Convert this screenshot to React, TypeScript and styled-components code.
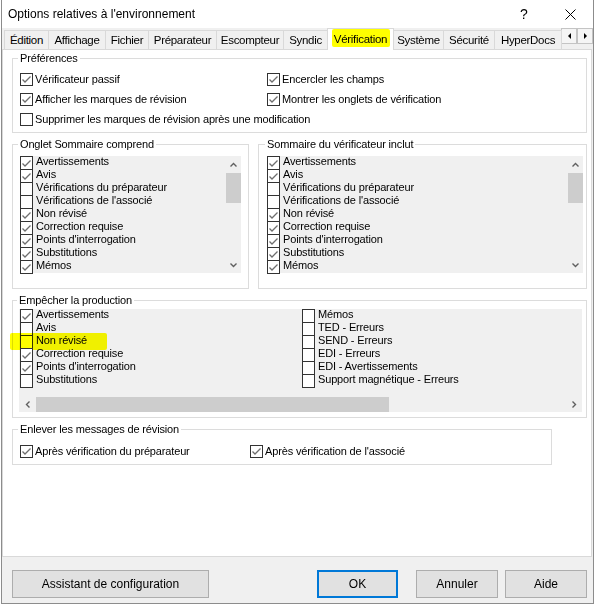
import styled, { createGlobalStyle } from "styled-components";

const GlobalStyle = createGlobalStyle`
  html, body {
    margin: 0;
    padding: 0;
    background: #ffffff;
  }
  body {
    font-family: "Liberation Sans", Arial, sans-serif;
    color: #000;
  }
  * {
    box-sizing: border-box;
  }
`;

const Window = styled.div`
  width: 593px;
  height: 604px;
  margin-left: 1px;
  border: 1px solid #8c8c8c;
  border-top: none;
  background: #f0f0f0;
  display: flex;
  flex-direction: column;
`;

const TitleBar = styled.div`
  flex: 0 0 28px;
  background: #fff;
  display: flex;
  align-items: center;
  padding-left: 6px;
  font-size: 12px;
`;

const Title = styled.div`
  flex: 1;
`;

const TitleButton = styled.div`
  width: 46px;
  height: 28px;
  display: flex;
  align-items: center;
  justify-content: center;
  font-size: 14px;
`;

const TabStrip = styled.div`
  flex: 0 0 19px;
  display: flex;
  align-items: flex-end;
  padding-left: 2px;
`;

const Tab = styled.div<{ $w: number; $active?: boolean }>`
  position: relative;
  width: ${(p) => p.$w}px;
  height: ${(p) => (p.$active ? 22 : 19)}px;
  margin-left: -1px;
  margin-bottom: ${(p) => (p.$active ? -1 : 0)}px;
  padding-bottom: ${(p) => (p.$active ? 2 : 1)}px;
  border: 1px solid #d9d9d9;
  border-bottom: none;
  background: ${(p) => (p.$active ? "#ffffff" : "#f0f0f0")};
  z-index: ${(p) => (p.$active ? 2 : 1)};
  font-size: 11.5px;
  letter-spacing: -0.3px;
  display: flex;
  align-items: center;
  justify-content: center;
  white-space: nowrap;
  &:first-child {
    margin-left: 0;
  }
`;

const Marker = styled.span<{ $l: number; $t: number; $w: number; $h: number }>`
  position: absolute;
  left: ${(p) => p.$l}px;
  top: ${(p) => p.$t}px;
  width: ${(p) => p.$w}px;
  height: ${(p) => p.$h}px;
  background: #ffff00;
  mix-blend-mode: multiply;
  border-radius: 2px;
  pointer-events: none;
`;

const TabScroll = styled.div`
  display: flex;
  align-self: flex-start;
  margin-left: -1px;
`;

const TabScrollBtn = styled.div`
  width: 16px;
  height: 16px;
  border: 1px solid #c4c4c4;
  background: #f5f5f5;
  display: flex;
  align-items: center;
  justify-content: center;
`;

const Tri = styled.span<{ $dir: "left" | "right" }>`
  width: 0;
  height: 0;
  border-top: 3px solid transparent;
  border-bottom: 3px solid transparent;
  ${(p) =>
    p.$dir === "left"
      ? "border-right: 3px solid #000;"
      : "border-left: 3px solid #000;"}
`;

const Panel = styled.div`
  flex: 0 0 508px;
  margin-right: 1px;
  border: 1px solid #d9d9d9;
  background: #fff;
  padding: 2px 4px 0 9px;
  display: flex;
  flex-direction: column;
  gap: 5px;
`;

const Group = styled.fieldset<{ $pad: string; $w?: number; $mt?: number }>`
  margin: ${(p) => p.$mt || 0}px 0 0 0;
  border: 1px solid #dcdcdc;
  padding: ${(p) => p.$pad};
  min-width: 0;
  ${(p) => (p.$w ? `width: ${p.$w}px;` : "")}
`;

const Legend = styled.legend`
  font-size: 11px;
  line-height: 13px;
  letter-spacing: -0.15px;
  padding: 0 2px;
  margin-left: -2px;
`;

const PrefGrid = styled.div<{ $col: number }>`
  display: grid;
  grid-template-columns: ${(p) => p.$col}px 1fr;
  grid-auto-rows: 20px;
`;

const CheckItem = styled.div<{ $span?: boolean }>`
  display: flex;
  align-items: center;
  gap: 2px;
  font-size: 11px;
  letter-spacing: -0.15px;
  white-space: nowrap;
  ${(p) => (p.$span ? "grid-column: 1 / -1;" : "")}
`;

const Box = styled.span<{ $stacked?: boolean }>`
  flex: 0 0 13px;
  width: 13px;
  height: ${(p) => (p.$stacked ? 14 : 13)}px;
  margin-bottom: ${(p) => (p.$stacked ? -1 : 0)}px;
  border: 1px solid #333;
  background: #fff;
  display: flex;
  align-items: center;
  justify-content: center;
`;

const ListRow = styled.div`
  display: grid;
  grid-template-columns: 237px 1fr;
  gap: 9px;
`;

const ListBox = styled.div<{ $w: number; $h: number }>`
  width: ${(p) => p.$w}px;
  height: ${(p) => p.$h}px;
  background: #f0f0f0;
  display: flex;
`;

const ListItems = styled.div`
  flex: 1;
  display: flex;
  flex-direction: column;
`;

const ListItem = styled.div`
  position: relative;
  height: 13px;
  display: flex;
  align-items: flex-start;
  font-size: 11px;
  line-height: 13px;
  letter-spacing: -0.15px;
  white-space: nowrap;
`;

const ItemText = styled.span`
  margin-left: 3px;
  margin-top: -1px;
`;

const VScroll = styled.div`
  width: 15px;
  display: flex;
  flex-direction: column;
`;

const ScrollArrow = styled.div<{ $w: number; $h: number }>`
  width: ${(p) => p.$w}px;
  height: ${(p) => p.$h}px;
  flex: 0 0 auto;
  display: flex;
  align-items: center;
  justify-content: center;
`;

const Thumb = styled.div<{ $w: number; $h: number }>`
  flex: 0 0 auto;
  width: ${(p) => p.$w}px;
  height: ${(p) => p.$h}px;
  background: #cdcdcd;
`;

const Spacer = styled.div`
  flex: 1;
`;

const WideList = styled.div`
  width: 563px;
  height: 103px;
  background: #f0f0f0;
  display: flex;
  flex-direction: column;
`;

const Columns = styled.div`
  display: grid;
  grid-template-columns: 282px 1fr;
  padding-left: 1px;
`;

const HScroll = styled.div`
  margin-top: auto;
  height: 15px;
  display: flex;
`;

const Footer = styled.div`
  flex: 1;
  display: flex;
  align-items: flex-start;
  padding: 13px 6px 0 10px;
`;

const Button = styled.div<{ $w: number; $ml?: string; $default?: boolean }>`
  width: ${(p) => p.$w}px;
  height: 28px;
  margin-left: ${(p) => p.$ml || "0"};
  background: #e1e1e1;
  border: ${(p) => (p.$default ? "2px solid #0078d7" : "1px solid #adadad")};
  font-size: 12px;
  display: flex;
  align-items: center;
  justify-content: center;
`;

const Check = () => (
  <svg width="11" height="11" viewBox="0 0 11 11">
    <polyline
      points="1.5,5.5 4,8 9.5,2.5"
      fill="none"
      stroke="#6e6e6e"
      strokeWidth="1.3"
    />
  </svg>
);

const Chevron = ({ dir }: { dir: "up" | "down" | "left" | "right" }) => {
  const pts = {
    up: "0.5,4.5 3.5,1.5 6.5,4.5",
    down: "0.5,1.5 3.5,4.5 6.5,1.5",
    left: "4.5,0.5 1.5,3.5 4.5,6.5",
    right: "1.5,0.5 4.5,3.5 1.5,6.5",
  }[dir];
  const vert = dir === "up" || dir === "down";
  return (
    <svg width={vert ? 7 : 6} height={vert ? 6 : 7} viewBox={vert ? "0 0 7 6" : "0 0 6 7"}>
      <polyline points={pts} fill="none" stroke="#606060" strokeWidth="1.4" />
    </svg>
  );
};

const tabs: [string, number][] = [
  ["Édition", 45],
  ["Affichage", 58],
  ["Fichier", 44],
  ["Préparateur", 69],
  ["Escompteur", 68],
  ["Syndic", 45],
  ["Vérification", 67],
  ["Système", 51],
  ["Sécurité", 52],
  ["HyperDocs", 68],
];

const summary: [string, boolean][] = [
  ["Avertissements", true],
  ["Avis", true],
  ["Vérifications du préparateur", false],
  ["Vérifications de l'associé", false],
  ["Non révisé", true],
  ["Correction requise", true],
  ["Points d'interrogation", true],
  ["Substitutions", true],
  ["Mémos", true],
];

const blockLeft: [string, boolean][] = [
  ["Avertissements", true],
  ["Avis", false],
  ["Non révisé", false],
  ["Correction requise", true],
  ["Points d'interrogation", true],
  ["Substitutions", false],
];

const blockRight: [string, boolean][] = [
  ["Mémos", false],
  ["TED - Erreurs", false],
  ["SEND - Erreurs", false],
  ["EDI - Erreurs", false],
  ["EDI - Avertissements", false],
  ["Support magnétique - Erreurs", false],
];

const Item = ({ label, checked, marked }: { label: string; checked: boolean; marked?: boolean }) => (
  <ListItem>
    <Box $stacked>{checked && <Check />}</Box>
    <ItemText>{label}</ItemText>
    {marked && <Marker $l={-10} $t={-2} $w={97} $h={17} />}
  </ListItem>
);

const CheckList = ({ width }: { width: number }) => (
  <ListBox $w={width} $h={117}>
    <ListItems>
      {summary.map(([l, c]) => (
        <Item key={l} label={l} checked={c} />
      ))}
    </ListItems>
    <VScroll>
      <ScrollArrow $w={15} $h={17}>
        <Chevron dir="up" />
      </ScrollArrow>
      <Thumb $w={15} $h={30} />
      <Spacer />
      <ScrollArrow $w={15} $h={17}>
        <Chevron dir="down" />
      </ScrollArrow>
    </VScroll>
  </ListBox>
);

const App = () => {
  return (
    <>
      <GlobalStyle />
      <Window>
        <TitleBar>
          <Title>Options relatives à l'environnement</Title>
          <TitleButton>?</TitleButton>
          <TitleButton>
            <svg width="11" height="11" viewBox="0 0 11 11">
              <path d="M0.5 0.5 L10.5 10.5 M10.5 0.5 L0.5 10.5" stroke="#000" strokeWidth="1" />
            </svg>
          </TitleButton>
        </TitleBar>

        <TabStrip>
          {tabs.map(([t, w]) => (
            <Tab key={t} $w={w} $active={t === "Vérification"}>
              {t}
              {t === "Vérification" && <Marker $l={4} $t={0} $w={58} $h={18} />}
            </Tab>
          ))}
          <TabScroll>
            <TabScrollBtn>
              <Tri $dir="left" />
            </TabScrollBtn>
            <TabScrollBtn>
              <Tri $dir="right" />
            </TabScrollBtn>
          </TabScroll>
        </TabStrip>

        <Panel>
          <Group $pad="4px 7px 3px 7px">
            <Legend>Préférences</Legend>
            <PrefGrid $col={247}>
              <CheckItem>
                <Box>
                  <Check />
                </Box>
                Vérificateur passif
              </CheckItem>
              <CheckItem>
                <Box>
                  <Check />
                </Box>
                Encercler les champs
              </CheckItem>
              <CheckItem>
                <Box>
                  <Check />
                </Box>
                Afficher les marques de révision
              </CheckItem>
              <CheckItem>
                <Box>
                  <Check />
                </Box>
                Montrer les onglets de vérification
              </CheckItem>
              <CheckItem $span>
                <Box />
                Supprimer les marques de révision après une modification
              </CheckItem>
            </PrefGrid>
          </Group>

          <ListRow>
            <Group $pad="5px 7px 15px 7px">
              <Legend>Onglet Sommaire comprend</Legend>
              <CheckList width={221} />
            </Group>
            <Group $pad="5px 7px 15px 8px">
              <Legend>Sommaire du vérificateur inclut</Legend>
              <CheckList width={316} />
            </Group>
          </ListRow>

          <Group $pad="2px 7px 5px 6px">
            <Legend>Empêcher la production</Legend>
            <WideList>
              <Columns>
                <ListItems>
                  {blockLeft.map(([l, c]) => (
                    <Item key={l} label={l} checked={c} marked={l === "Non révisé"} />
                  ))}
                </ListItems>
                <ListItems>
                  {blockRight.map(([l, c]) => (
                    <Item key={l} label={l} checked={c} />
                  ))}
                </ListItems>
              </Columns>
              <HScroll>
                <ScrollArrow $w={17} $h={15}>
                  <Chevron dir="left" />
                </ScrollArrow>
                <Thumb $w={353} $h={15} />
                <Spacer />
                <ScrollArrow $w={17} $h={15}>
                  <Chevron dir="right" />
                </ScrollArrow>
              </HScroll>
            </WideList>
          </Group>

          <Group $pad="5px 7px 3px 7px" $w={540}>
            <Legend>Enlever les messages de révision</Legend>
            <PrefGrid $col={230}>
              <CheckItem>
                <Box>
                  <Check />
                </Box>
                Après vérification du préparateur
              </CheckItem>
              <CheckItem>
                <Box>
                  <Check />
                </Box>
                Après vérification de l'associé
              </CheckItem>
            </PrefGrid>
          </Group>
        </Panel>

        <Footer>
          <Button $w={197}>Assistant de configuration</Button>
          <Button $w={81} $ml="auto" $default>
            OK
          </Button>
          <Button $w={82} $ml="18px">
            Annuler
          </Button>
          <Button $w={82} $ml="7px">
            Aide
          </Button>
        </Footer>
      </Window>
    </>
  );
};

export default App;
